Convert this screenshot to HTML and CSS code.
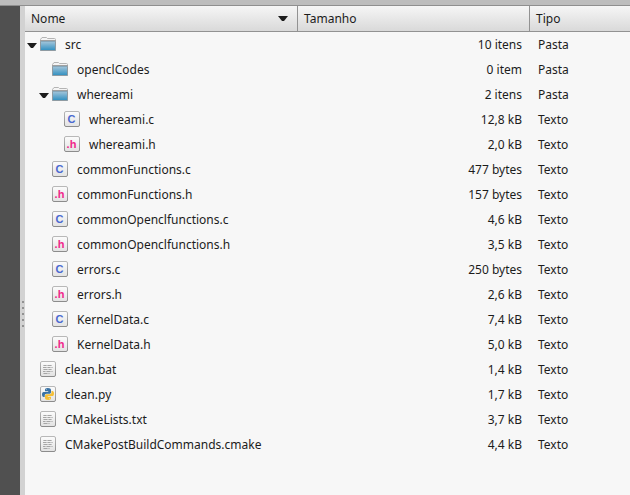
FILE: index.html
```
<!DOCTYPE html>
<html lang="pt">
<head>
<meta charset="utf-8">
<title>src</title>
<link rel="stylesheet" href="styles.css">
</head>
<body>
<svg class="defs" aria-hidden="true">
  <defs>
    <linearGradient id="blue" x1="0" y1="0" x2="0" y2="1"><stop offset="0" stop-color="#a3c5da"/><stop offset="1" stop-color="#2f8fc0"/></linearGradient>
    <linearGradient id="paper" x1="0" y1="0" x2="0" y2="1"><stop offset="0" stop-color="#fcfcfc"/><stop offset="1" stop-color="#e2e2e2"/></linearGradient>
    <linearGradient id="edge" x1="0" y1="0" x2="0" y2="1"><stop offset="0" stop-color="#b8b8b8"/><stop offset="1" stop-color="#8c8c8c"/></linearGradient>
    <symbol id="folder" viewBox="0 0 16 16">
      <path d="M.5 14V3.500q0-1 1-1l.5-1h4.500l1 1h7q1 0 1 1V14z" fill="#f4f4f4" stroke="#b4b4b4"/>
      <path d="M0 4.500h16" stroke="#a0a0a0"/>
      <path d="M.5 5.500h15v9H.5z" fill="url(#blue)" stroke="#8f9ba2"/>
      <path d="M1 5.500h14" stroke="#86a7ba"/>
    </symbol>
    <symbol id="sheet" viewBox="0 0 16 16">
      <rect x=".5" y=".5" width="15" height="15" rx="1.500" fill="url(#paper)" stroke="url(#edge)"/>
    </symbol>
    <symbol id="c" viewBox="0 0 16 16">
      <use href="#sheet"/><text class="glyph glyph-c" x="7.500" y="12" text-anchor="middle">C</text>
    </symbol>
    <symbol id="h" viewBox="0 0 16 16">
      <use href="#sheet"/><text class="glyph glyph-h" x="7.500" y="12" text-anchor="middle">.h</text>
    </symbol>
    <symbol id="text" viewBox="0 0 16 16">
      <use href="#sheet"/>
      <path d="M3 4.500h9M3 6.500h10M3 8.500h9M3 10.500h10M3 12.500h7" stroke="#c4c4c4"/>
      <path d="M4 4.500h2M8 4.500h3M3 6.500h3M8 6.500h2M4 8.500h3M9 8.500h2M3 10.500h2M7 10.500h3M4 12.500h3" stroke="#a6a6a6"/>
    </symbol>
    <symbol id="python" viewBox="0 0 16 16">
      <use href="#sheet"/>
      <path d="M7.800 2C5.600 2 5 2.700 5 4v1.300h3.200v.6H3.700C2.500 5.900 2 7 2 8.500s.6 2.500 1.700 2.500h1V9.600c0-1 .8-1.800 1.800-1.800h3c.9 0 1.500-.7 1.500-1.500V4c0-1.300-1-2-3.200-2z" fill="#3972a4"/>
      <path d="M8.200 14c2.200 0 2.800-.7 2.800-2v-1.300H7.800v-.6h4.500c1.200 0 1.700-1.100 1.700-2.600S13.400 5 12.300 5h-.8v1.600c0 1-.8 1.700-1.700 1.700h-3C5.800 8.300 5 9 5 9.900V12c0 1.300 1 2 3.200 2z" fill="#f5bf35"/>
      <circle cx="6.400" cy="3.700" r=".4" fill="#fff"/><circle cx="9.600" cy="12.300" r=".4" fill="#fff"/>
    </symbol>
    <symbol id="arrow" viewBox="0 0 10 5"><path d="M0 0h10L6 5H4z" fill="#1c1c1c"/></symbol>
  </defs>
</svg>
<div class="toolbar"></div>
<div class="body">
  <aside class="sidebar"></aside>
  <div class="splitter"><i></i><i></i><i></i><i></i><i></i></div>
  <main class="files">
    <table>
      <colgroup><col class="col-name"><col class="col-size"><col></colgroup>
      <thead>
        <tr>
          <th scope="col"><button class="sort" type="button">Nome<svg class="arrow"><use href="#arrow"/></svg></button></th>
          <th scope="col"><button class="sort" type="button">Tamanho</button></th>
          <th scope="col"><button class="sort" type="button">Tipo</button></th>
        </tr>
      </thead>
      <tbody id="rows"></tbody>
    </table>
  </main>
</div>
<script src="script.js"></script>
</body>
</html>
```
FILE: styles.css
```
* { box-sizing: border-box; }

body {
  margin: 0;
  min-height: 100vh;
  display: flex;
  flex-direction: column;
  background: #f7f7f7;
  color: #1c1c1c;
  font: 12px/24px "Noto Sans", sans-serif;
}

.defs { position: absolute; width: 0; height: 0; }

.toolbar {
  height: 6px;
  background: #bdbdbd;
  border-bottom: 1px solid #8f8f8f;
}

.body { flex: 1; display: flex; }

.sidebar { width: 20px; background: #505050; }

.splitter {
  width: 5px;
  display: flex;
  flex-direction: column;
  align-items: center;
  justify-content: center;
  gap: 4px;
  padding-top: 126px;
  background: #d2d2d2;
}

.splitter i { width: 2px; height: 2px; background: #929292; }

.files { flex: 1; min-width: 0; }

table { width: 100%; border-collapse: separate; border-spacing: 0; table-layout: fixed; }
.col-name { width: 273px; }
.col-size { width: 232px; }

th {
  height: 26px;
  padding: 0;
  border-bottom: 1px solid #929292;
  background: linear-gradient(#f6f6f6, #d9d9d9);
  font-weight: normal;
}

.sort {
  width: 100%;
  height: 25px;
  display: flex;
  align-items: center;
  justify-content: space-between;
  padding: 0 9px 0 6px;
  border: 0;
  border-right: 1px solid #929292;
  background: none;
  color: inherit;
  font: inherit;
}

th:last-child .sort { border-right: 0; }

td { height: 25px; padding: 1px 0 0; white-space: nowrap; }
.size { padding-right: 8px; text-align: right; }
.type { padding-left: 8px; }

.name { display: flex; align-items: center; padding-left: 2px; }
.level-1 { padding-left: 14px; }
.level-2 { padding-left: 26px; }

.expander {
  width: 10px;
  height: 16px;
  display: flex;
  align-items: center;
  margin-right: 3px;
  padding: 0;
  border: 0;
  background: none;
}

.arrow { width: 10px; height: 5px; }
.icon { width: 16px; height: 16px; margin: 0 9px 2px 0; }

.glyph { font-family: "Liberation Sans", sans-serif; font-weight: bold; font-size: 11px; }
.glyph-c { fill: #4a68d0; }
.glyph-h { fill: #f0278a; }
```
FILE: script.js
```
const files = [
  [0, "folder", "src", "10 itens", "Pasta", true],
  [1, "folder", "openclCodes", "0 item", "Pasta"],
  [1, "folder", "whereami", "2 itens", "Pasta", true],
  [2, "c", "whereami.c", "12,8 kB", "Texto"],
  [2, "h", "whereami.h", "2,0 kB", "Texto"],
  [1, "c", "commonFunctions.c", "477 bytes", "Texto"],
  [1, "h", "commonFunctions.h", "157 bytes", "Texto"],
  [1, "c", "commonOpenclfunctions.c", "4,6 kB", "Texto"],
  [1, "h", "commonOpenclfunctions.h", "3,5 kB", "Texto"],
  [1, "c", "errors.c", "250 bytes", "Texto"],
  [1, "h", "errors.h", "2,6 kB", "Texto"],
  [1, "c", "KernelData.c", "7,4 kB", "Texto"],
  [1, "h", "KernelData.h", "5,0 kB", "Texto"],
  [0, "text", "clean.bat", "1,4 kB", "Texto"],
  [0, "python", "clean.py", "1,7 kB", "Texto"],
  [0, "text", "CMakeLists.txt", "3,7 kB", "Texto"],
  [0, "text", "CMakePostBuildCommands.cmake", "4,4 kB", "Texto"],
];

document.getElementById("rows").innerHTML = files.map(([level, icon, name, size, type, open]) => `
  <tr>
    <td><div class="name level-${level}">
      ${open
        ? `<button class="expander" type="button" aria-expanded="true" aria-labelledby="${name}"><svg class="arrow"><use href="#arrow"/></svg></button>`
        : `<span class="expander"></span>`}
      <svg class="icon"><use href="#${icon}"/></svg><span id="${name}">${name}</span>
    </div></td>
    <td class="size">${size}</td>
    <td class="type">${type}</td>
  </tr>`).join("");
```
